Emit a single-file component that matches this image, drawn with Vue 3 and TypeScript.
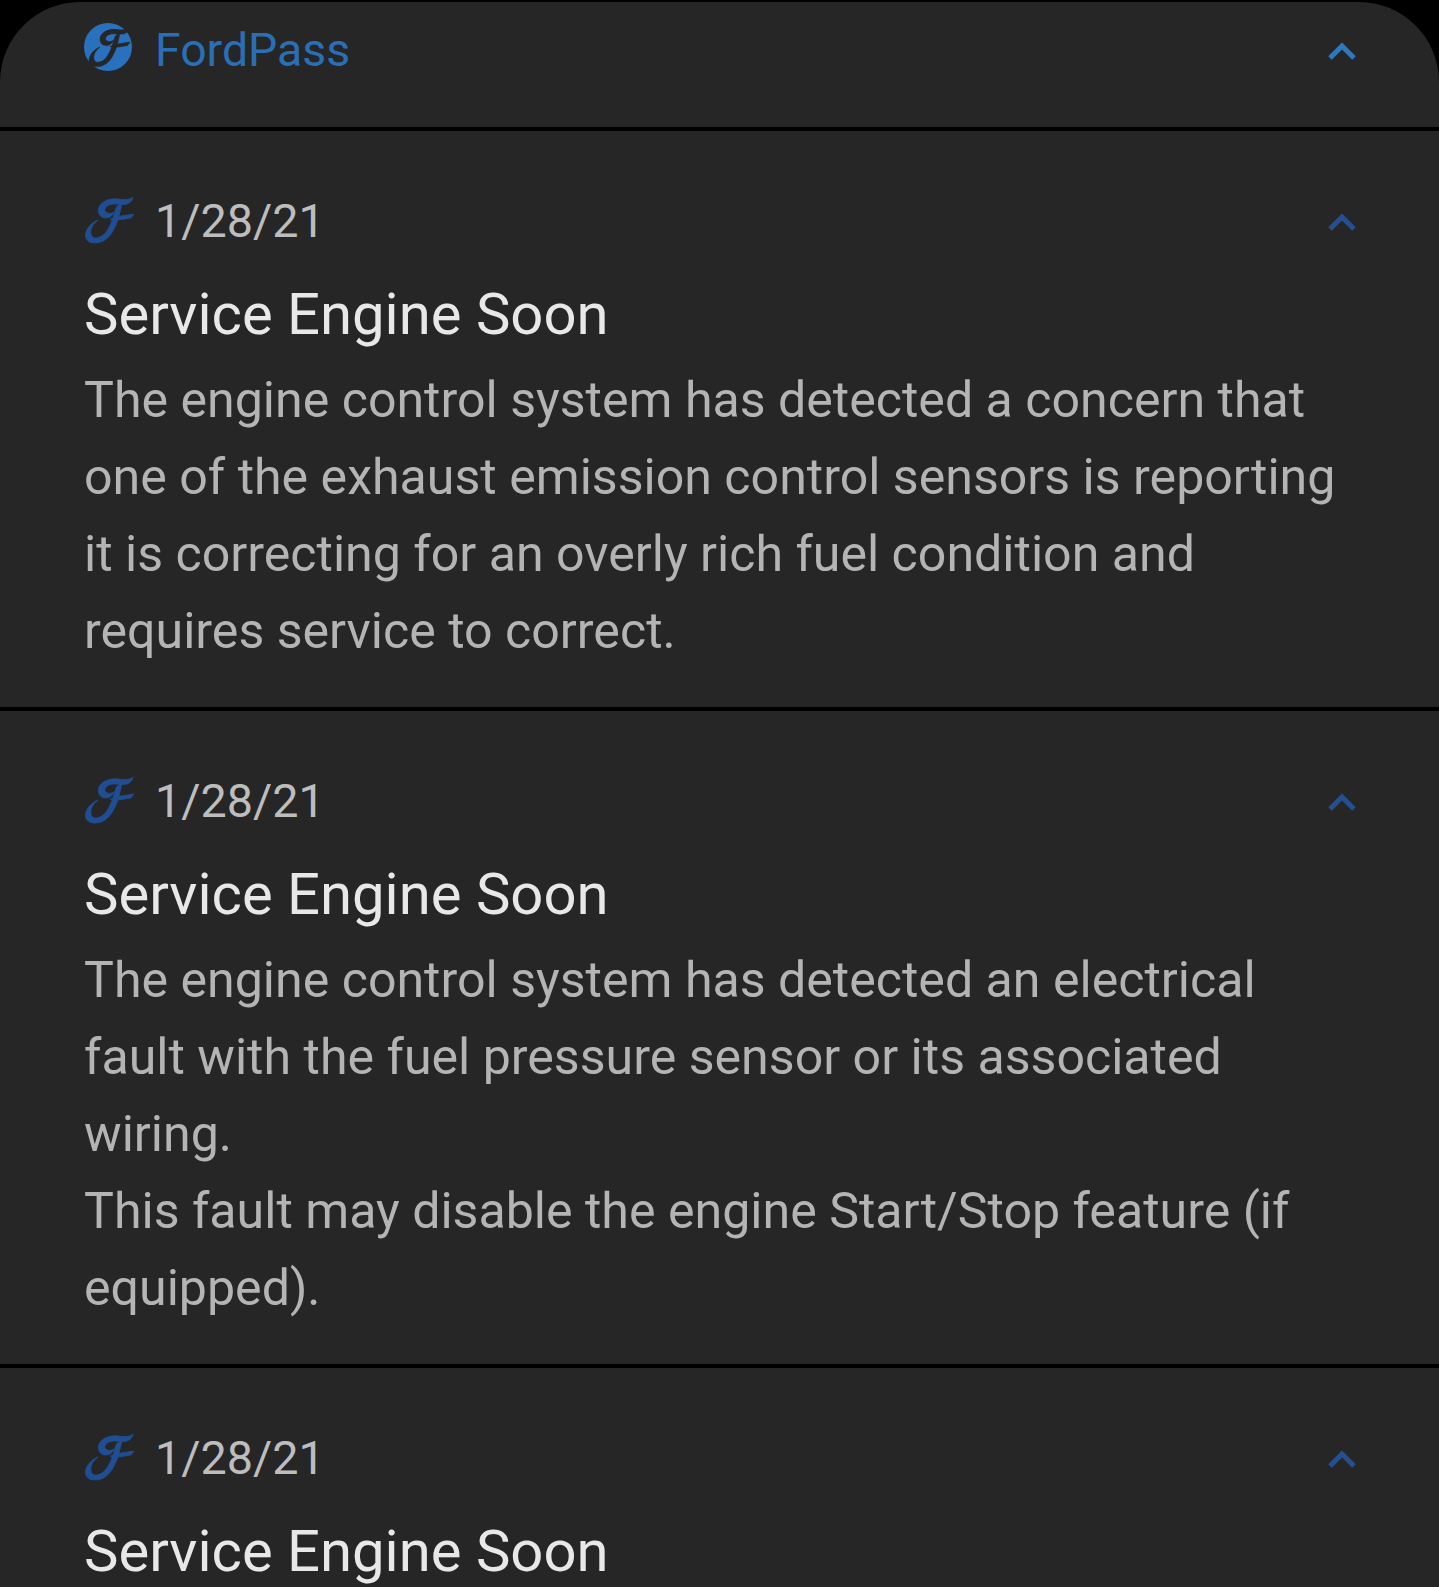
<template>
  <main class="panel">
    <header class="app-row">
      <div class="app-name">
        <svg class="logo" viewBox="0 0 48 48">
          <circle cx="24" cy="24" r="24" fill="#2a71bd" />
          <g class="logo-f" transform="translate(4 4) scale(.84)">
            <path v-for="d in fPaths" :key="d" :d="d" />
          </g>
        </svg>
        <span>FordPass</span>
      </div>
      <svg class="chevron bright" viewBox="0 0 28 18"><path d="M2 16 14 4l12 12" /></svg>
    </header>

    <section v-for="(item, i) in items" :key="i" class="message">
      <div class="meta-row">
        <div class="meta">
          <svg class="script-f" viewBox="0 0 50 50">
            <path v-for="d in fPaths" :key="d" :d="d" />
          </svg>
          <span class="date">{{ item.date }}</span>
        </div>
        <svg class="chevron" viewBox="0 0 28 18"><path d="M2 16 14 4l12 12" /></svg>
      </div>
      <h2>{{ item.title }}</h2>
      <p v-for="(para, j) in item.body" :key="j">{{ para }}</p>
    </section>
  </main>
</template>

<script setup lang="ts">
// script F, split into stem, top swash and crossbar
const fPaths = [
  'M38 7C36 17 34 26 30 33C26 41 20 47 11 47C3 47 0 42 2 36C4 30 9 26 14 24C9 28 6 33 7 38C8 43 13 43 18 40C24 36 28 26 31 15C32 11 34 8 38 7Z',
  'M49 1C46 4 40 4 34 3C26 2 18 5 15 11C13 17 16 22 22 22C26 22 29 19 30 16C27 18 23 18 21 15C20 11 25 8 30 8C35 8 39 9 43 8C46 7 48 5 49 1Z',
  'M26 23C30 23 32 21 37 20L50 18L47 22C40 23 33 25 26 23Z',
]

const items = [
  {
    date: '1/28/21',
    title: 'Service Engine Soon',
    body: [
      'The engine control system has detected a concern that one of the exhaust emission control sensors is reporting it is correcting for an overly rich fuel condition and requires service to correct.',
    ],
  },
  {
    date: '1/28/21',
    title: 'Service Engine Soon',
    body: [
      'The engine control system has detected an electrical fault with the fuel pressure sensor or its associated wiring.',
      'This fault may disable the engine Start/Stop feature (if equipped).',
    ],
  },
  {
    date: '1/28/21',
    title: 'Service Engine Soon',
    body: [],
  },
]
</script>

<style>
html,
body {
  background: #000;
  overflow: hidden;
}
</style>

<style scoped>
.panel {
  height: 1585px;
  margin-top: 2px;
  background: #262626;
  border-radius: 80px 80px 0 0;
  overflow: hidden;
  font-family: Roboto, "Liberation Sans", sans-serif;
}

.app-row {
  display: flex;
  justify-content: space-between;
  align-items: flex-start;
  height: 125px;
  padding: 21px 83px 0 84px;
  box-sizing: border-box;
}

.app-name {
  display: flex;
  align-items: center;
  gap: 23px;
  height: 48px;
  font-size: 46.4px;
  line-height: 54px;
  color: #2a6fb5;
}

.app-name span {
  padding-top: 5px;
}

.logo {
  width: 48px;
  height: 48px;
}

.logo-f {
  fill: #262626;
  stroke: #262626;
  stroke-width: 0.8;
}

.message {
  border-top: 4px solid #000;
  padding: 64px 83px 0 84px;
  box-sizing: border-box;
}

.meta-row {
  display: flex;
  justify-content: space-between;
  align-items: center;
  height: 52px;
}

.meta {
  display: flex;
  align-items: center;
  gap: 21px;
}

.script-f {
  width: 50px;
  height: 50px;
  fill: #1f4e93;
  stroke: #1f4e93;
  stroke-width: 0.8;
}

.date {
  font-size: 46.7px;
  color: #bdbdbd;
}

.chevron {
  width: 28px;
  height: 18px;
  margin-top: 2px;
  fill: none;
  stroke: #254f90;
  stroke-width: 5;
}

.chevron.bright {
  margin-top: 19px;
  stroke: #2f78c0;
}

h2 {
  margin: 20px 0 0;
  font-size: 58px;
  font-weight: 400;
  line-height: 95px;
  color: #e8e8e8;
}

p {
  margin: 0;
  font-size: 50.1px;
  line-height: 77px;
  color: #b4b4b4;
}

.message p:last-child {
  padding-bottom: 37px;
}
</style>
